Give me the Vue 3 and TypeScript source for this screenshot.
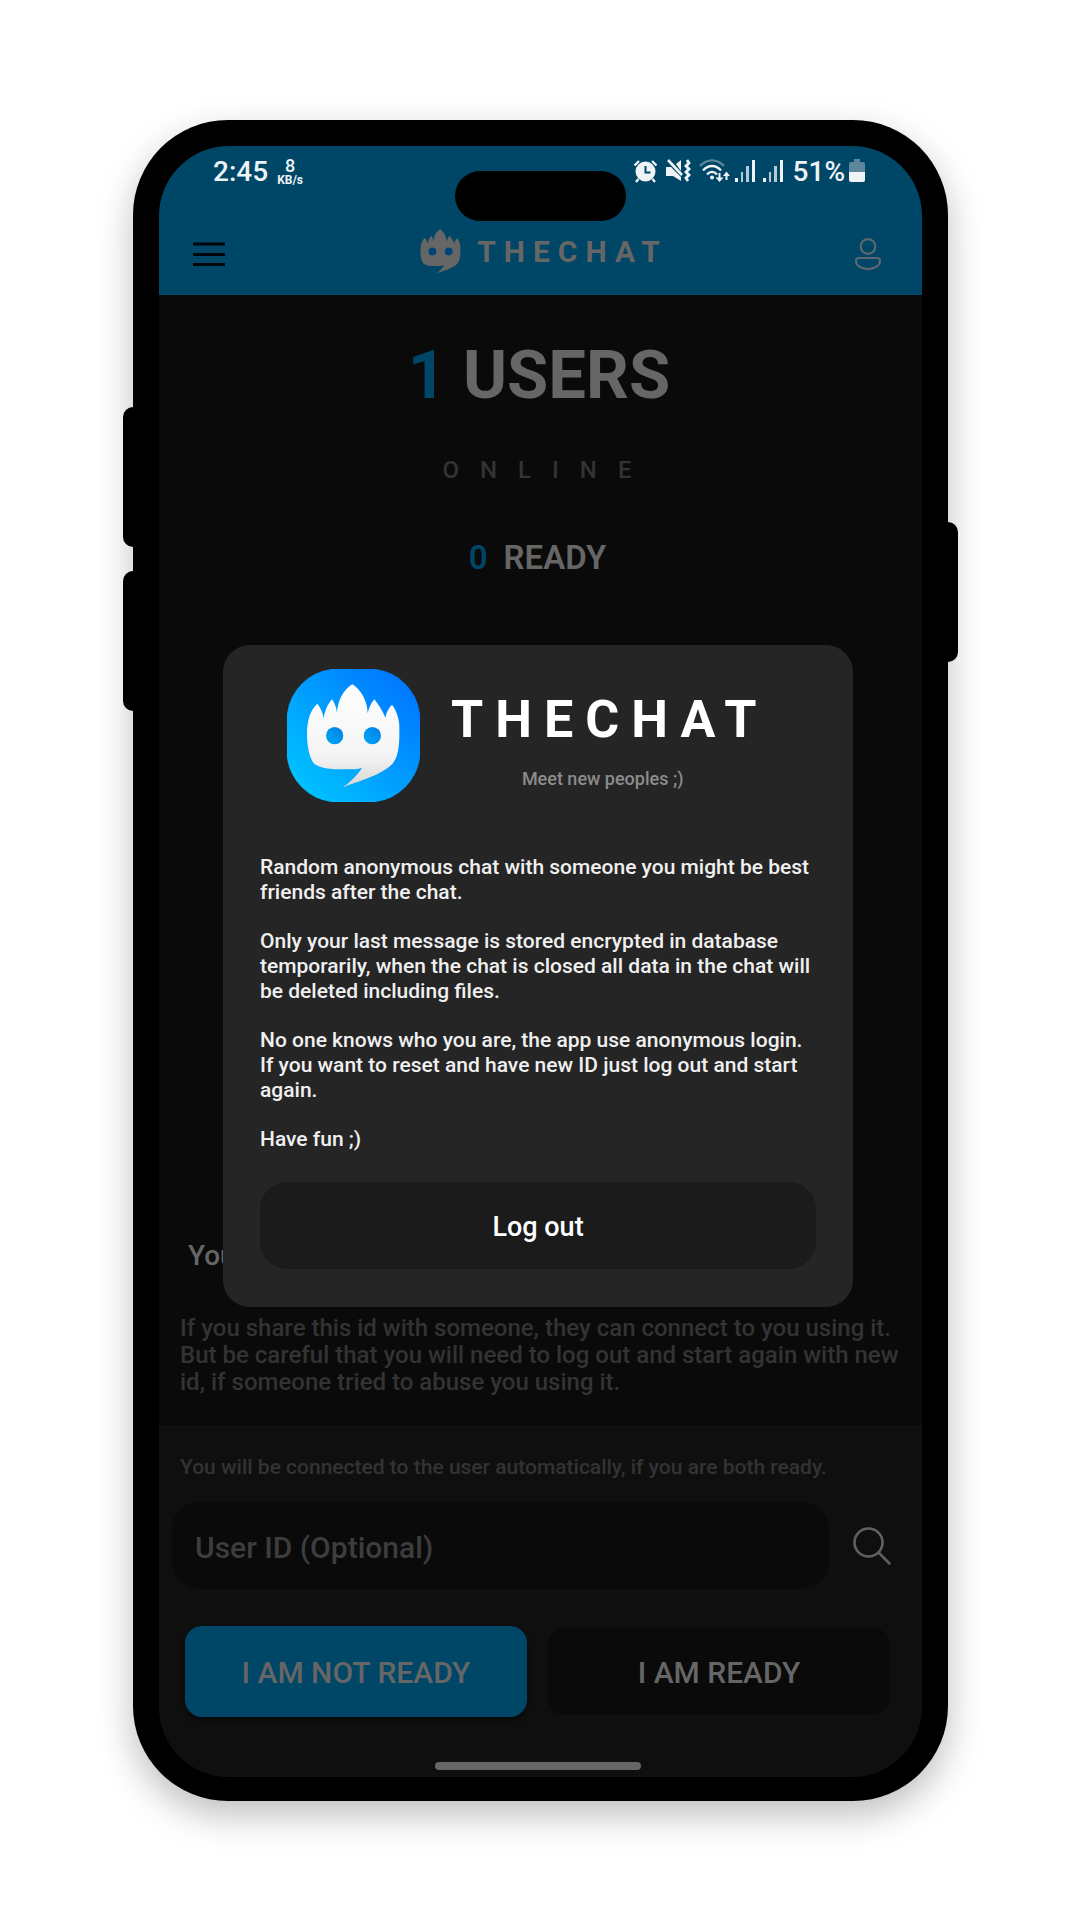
<script setup lang="ts">
import { ref } from 'vue'

const userId = ref('')
const onlineCount = ref(1)
const readyCount = ref(0)

const facePath =
  'M196 46 C222 62 241 95 242 133 C246 116 252 103 262 91 C274 106 287 126 295 146 C298 130 304 118 315 107 C328 125 337 148 337 173 L337 205 C336 245 329 274 312 289 C280 318 224 335 169 354 C192 337 211 318 226 296 C217 299 207 301 196 301 L140 301 C112 298 92 294 80 283 C67 265 60 230 60 195 C60 155 70 122 91 104 C101 117 107 131 110 147 C114 124 123 104 135 91 C144 104 149 117 150 133 C152 94 169 63 196 46 Z'

const paragraphs: string[] = [
  'Random anonymous chat with someone you might be best friends after the chat.',
  'Only your last message is stored encrypted in database temporarily, when the chat is closed all data in the chat will be deleted including files.',
  'No one knows who you are, the app use anonymous login. If you want to reset and have new ID just log out and start again.',
  'Have fun ;)',
]
</script>

<template>
  <div class="page">
    <div class="phone">
      <span class="side volume-up"></span>
      <span class="side volume-down"></span>
      <span class="side power"></span>

      <div class="screen">
        <header class="top">
          <div class="status">
            <span class="clock">2:45</span>
            <span class="speed"><b>8</b><small>KB/s</small></span>
            <div class="indicators">
              <svg class="alarm" width="25" height="24" viewBox="0 0 25 24" fill="none">
                <path d="M1.5 6.5 6 2M23.5 6.5 19 2M5.5 20 3 23M19.5 20 22 23" stroke="#edf3f6" stroke-width="2.4" />
                <circle cx="12.5" cy="12.5" r="10" fill="#edf3f6" />
                <path d="M12.5 7v6.5h5" stroke="#004666" stroke-width="2" />
              </svg>
              <svg class="mute" width="25" height="24" viewBox="0 0 25 24" fill="#edf3f6">
                <path d="M0 8h5L15 18v4L7 17H0ZM10 5l5-4v11Z" />
                <path d="M2 1 16 16" stroke="#edf3f6" stroke-width="2.6" />
                <path d="m21 1 2 3-3 3 3 3-3 3 3 3-3 3 2 3" fill="none" stroke="#edf3f6" stroke-width="2.8" />
              </svg>
              <svg class="wifi" width="31" height="24" viewBox="0 0 31 24" fill="none">
                <path d="M1 7C8-.5 18-.5 25 7" stroke="#5d879b" stroke-width="2.4" />
                <path d="M4 11.5c5.500-6 12.500-6 18 0M8 15.500c3-3.500 7-3.500 10 0" stroke="#edf3f6" stroke-width="2.4" />
                <circle cx="13" cy="18.500" r="2" fill="#edf3f6" />
                <path d="M20.500 14v7M27.500 21v-6" stroke="#edf3f6" stroke-width="2" />
                <path d="M16.500 18.500h8l-4 4.500ZM24 17h7l-3.500-4.500Z" fill="#edf3f6" />
              </svg>
              <svg v-for="n in 2" :key="n" class="signal" width="20" height="24" viewBox="0 0 20 24">
                <path d="M0 19h3v4H0ZM17 1h3v22h-3Z" fill="#edf3f6" />
                <path d="M6 13h2v10H6ZM11 7h3v16h-3Z" fill="#b4c9d3" />
              </svg>
              <span class="percent">51%</span>
              <svg width="16" height="24" viewBox="0 0 16 24">
                <path d="M5 0h6v3h3a2 2 0 0 1 2 2v8H0V5a2 2 0 0 1 2-2h3Z" fill="#5d879b" />
                <path d="M0 13h16v8a2 2 0 0 1-2 2H2a2 2 0 0 1-2-2Z" fill="#edf3f6" />
              </svg>
            </div>
          </div>
          <span class="notch"></span>
          <nav class="nav">
            <button class="icon-button" type="button" aria-label="Menu">
              <svg width="32" height="24" viewBox="0 0 32 24">
                <path d="M0 2h32M0 12.500h32M0 22.500h32" stroke="#00060a" stroke-width="3" />
              </svg>
            </button>
            <div class="brand">
              <svg width="41" height="45" viewBox="58 44 282 312">
                <path :d="facePath" fill="#666" />
                <circle cx="143" cy="200" r="27" fill="#00457a" />
                <circle cx="256" cy="200" r="27" fill="#00457a" />
              </svg>
              <span>THECHAT</span>
            </div>
            <button class="icon-button" type="button" aria-label="Profile">
              <svg width="26" height="32" viewBox="0 0 26 32" fill="none" stroke="#5c686d" stroke-width="2.2">
                <circle cx="13" cy="8.500" r="7.300" />
                <path d="M4 20h18a3 3 0 0 1 3 3c0 4.500-5 8-12 8S1 27.500 1 23a3 3 0 0 1 3-3Z" />
              </svg>
            </button>
          </nav>
        </header>

        <main class="lobby">
          <h1 class="users"><span class="accent">{{ onlineCount }}</span> USERS</h1>
          <p class="online">ONLINE</p>
          <p class="ready"><span class="accent">{{ readyCount }}</span><span>READY</span></p>
          <section class="identity">
            <h2>Your ID</h2>
            <p>
              If you share this id with someone, they can connect to you using it. But be careful that you
              will need to log out and start again with new id, if someone tried to abuse you using it.
            </p>
          </section>
        </main>

        <form class="panel" @submit.prevent>
          <label class="hint" for="user-id">You will be connected to the user automatically, if you are both ready.</label>
          <div class="search-row">
            <input id="user-id" v-model="userId" type="text" placeholder="User ID (Optional)" />
            <button class="icon-button" type="submit" aria-label="Search">
              <svg width="38" height="38" viewBox="0 0 38 38" fill="none" stroke="#606060" stroke-width="2.6" stroke-linecap="round">
                <circle cx="15.500" cy="15.500" r="14" />
                <path d="m25.500 25.500 11 11" />
              </svg>
            </button>
          </div>
          <div class="choices">
            <button class="choice selected" type="button">I AM NOT READY</button>
            <button class="choice" type="button">I AM READY</button>
          </div>
          <span class="home-bar"></span>
        </form>

        <section class="about" role="dialog" aria-labelledby="about-title">
          <div class="about-head">
            <svg width="133" height="133" viewBox="0 0 399 399">
              <defs>
                <linearGradient id="sky" x1="0.1" y1="0.9" x2="0.9" y2="0.1">
                  <stop offset="0" stop-color="#00c2ff" />
                  <stop offset="1" stop-color="#0077ff" />
                </linearGradient>
                <linearGradient id="face" x1="0" y1="0" x2="0" y2="1">
                  <stop offset="0" stop-color="#fff" />
                  <stop offset="0.7" stop-color="#f4f4f4" />
                  <stop offset="1" stop-color="#d6d6d6" />
                </linearGradient>
                <linearGradient id="eye" x1="0" y1="1" x2="1" y2="0">
                  <stop offset="0" stop-color="#00a8f5" />
                  <stop offset="1" stop-color="#0080e6" />
                </linearGradient>
              </defs>
              <path
                d="M134 0H265A155 155 0 0 1 399 134V265A155 155 0 0 1 265 399H134A155 155 0 0 1 0 265V134A155 155 0 0 1 134 0Z"
                fill="url(#sky)"
              />
              <path :d="facePath" fill="url(#face)" />
              <circle cx="143" cy="200" r="26" fill="url(#eye)" />
              <circle cx="256" cy="200" r="26" fill="url(#eye)" />
            </svg>
            <div class="about-title">
              <h2 id="about-title">THECHAT</h2>
              <p>Meet new peoples ;)</p>
            </div>
          </div>
          <div class="about-text">
            <p v-for="text in paragraphs" :key="text">{{ text }}</p>
          </div>
          <button class="logout" type="button">Log out</button>
        </section>
      </div>
    </div>
  </div>
</template>

<style>
body {
  background: #fff;
}
</style>

<style scoped>
* {
  box-sizing: border-box;
}
h1,
h2,
p {
  margin: 0;
}
button,
input {
  border: 0;
  font: inherit;
  color: inherit;
}
svg {
  display: block;
  flex: none;
}
.page {
  min-height: 100vh;
  padding: 120px 132px 119px 133px;
  font-family: Roboto, "Liberation Sans", sans-serif;
  font-weight: 500;
  color: #666;
}
.phone {
  position: relative;
  display: flex;
  min-height: calc(100vh - 239px);
  padding: 26px 26px 24px;
  border-radius: 95px;
  background: #000;
  box-shadow: 0 14px 36px rgba(0, 0, 0, 0.26);
}
.side {
  position: absolute;
  width: 10px;
  height: 140px;
  background: #000;
}
.volume-up,
.volume-down {
  right: 100%;
  border-radius: 10px 0 0 10px;
}
.volume-up {
  top: 287px;
}
.volume-down {
  top: 451px;
}
.power {
  top: 402px;
  left: 100%;
  border-radius: 0 10px 10px 0;
}
.screen {
  position: relative;
  display: flex;
  flex: 1;
  flex-direction: column;
  overflow: hidden;
  border-radius: 70px;
  background: #0a0a0a;
}
.top {
  position: relative;
  background: #004666;
}
.status {
  display: flex;
  align-items: center;
  height: 51px;
  padding: 0 57px 0 54px;
  font-size: 28px;
  color: #edf3f6;
}
.speed {
  display: flex;
  flex-direction: column;
  align-items: center;
  margin-left: 9px;
}
.speed b {
  font-size: 18px;
  font-weight: 500;
  line-height: 17px;
}
.speed small {
  font-size: 12px;
  font-weight: 700;
  line-height: 12px;
}
.indicators {
  display: flex;
  align-items: center;
  margin-left: auto;
}
.indicators svg {
  margin-bottom: 2px;
}
.alarm,
.mute,
.signal {
  margin-right: 8px;
}
.wifi {
  margin-right: 5px;
}
.percent {
  margin: 0 4px 0 2px;
}
.notch {
  position: absolute;
  top: 25px;
  left: 50%;
  width: 171px;
  height: 50px;
  margin-left: -86px;
  border-radius: 25px;
  background: #000;
}
.nav {
  display: flex;
  align-items: center;
  justify-content: space-between;
  height: 98px;
  padding: 16px 41px 0 34px;
}
.icon-button {
  padding: 0;
  background: none;
}
.brand {
  display: flex;
  align-items: center;
  gap: 16px;
  padding: 0 0 5px 8px;
  font-size: 30px;
  font-weight: 700;
  letter-spacing: 8px;
}
.lobby {
  display: flex;
  flex: 1;
  flex-direction: column;
  padding-top: 40px;
  text-align: center;
}
.accent {
  color: #004666;
}
.users {
  padding-right: 3px;
  font-size: 67px;
  font-weight: 700;
  line-height: 80px;
}
.online {
  margin-top: 41px;
  padding-left: 14px;
  font-size: 24px;
  line-height: 28px;
  letter-spacing: 21px;
  color: #333;
}
.ready {
  display: flex;
  justify-content: center;
  gap: 16px;
  margin-top: 54px;
  padding-right: 6px;
  font-size: 33px;
  font-weight: 600;
  line-height: 40px;
}
.identity {
  margin-top: auto;
  padding: 0 20px 30px 21px;
  text-align: left;
}
.identity h2 {
  padding-left: 8px;
  font-size: 28px;
  font-weight: 500;
  line-height: 32px;
}
.identity p {
  margin-top: 43px;
  font-size: 24px;
  line-height: 27px;
  color: #333;
}
.panel {
  display: flex;
  flex-direction: column;
  padding: 28px 0 7px;
  border-top: 1px solid #131313;
  background: #0f0f0f;
}
.hint {
  padding-left: 21px;
  font-size: 21px;
  line-height: 24px;
  color: #333;
}
.search-row {
  display: flex;
  align-items: center;
  gap: 24px;
  margin-top: 23px;
  padding: 0 31px 0 13px;
}
.search-row input {
  flex: 1;
  min-width: 0;
  height: 87px;
  padding: 3px 23px 0;
  border-radius: 27px;
  background: #0a0a0a;
  font-size: 30px;
}
.search-row input::placeholder {
  color: #3d3d3d;
  opacity: 1;
}
.choices {
  display: flex;
  align-items: center;
  gap: 21px;
  margin-top: 37px;
  padding: 0 32px 0 26px;
}
.choice {
  flex: 1;
  height: 87px;
  padding: 2px 0 0;
  border-radius: 17px;
  background: #0a0a0a;
  font-size: 30px;
}
.choice.selected {
  height: 91px;
  background: #004666;
  box-shadow: 0 3px 6px rgba(0, 0, 0, 0.5);
}
.home-bar {
  align-self: center;
  width: 206px;
  height: 8px;
  margin: 45px 5px 0 0;
  border-radius: 4px;
  background: #666;
}
.about {
  position: absolute;
  top: 499px;
  left: 64px;
  right: 69px;
  padding: 24px 37px 38px;
  border-radius: 27px;
  background: #252525;
  color: #f0f0f0;
}
.about-head {
  display: flex;
  align-items: flex-start;
  gap: 31px;
  padding-left: 27px;
}
.about-title {
  padding-top: 21px;
  text-align: center;
}
.about-title h2 {
  font-size: 52px;
  font-weight: 700;
  line-height: 60px;
  letter-spacing: 12px;
  color: #fff;
}
.about-title p {
  margin-top: 17px;
  padding-right: 14px;
  font-size: 18px;
  line-height: 24px;
  color: #8c8c8c;
}
.about-text {
  display: grid;
  gap: 24px;
  margin-top: 53px;
  font-size: 21px;
  line-height: 25px;
}
.logout {
  width: 100%;
  height: 87px;
  margin-top: 30px;
  padding: 3px 0 0;
  border-radius: 27px;
  background: #1b1b1b;
  font-size: 27px;
  color: #fff;
}
</style>
